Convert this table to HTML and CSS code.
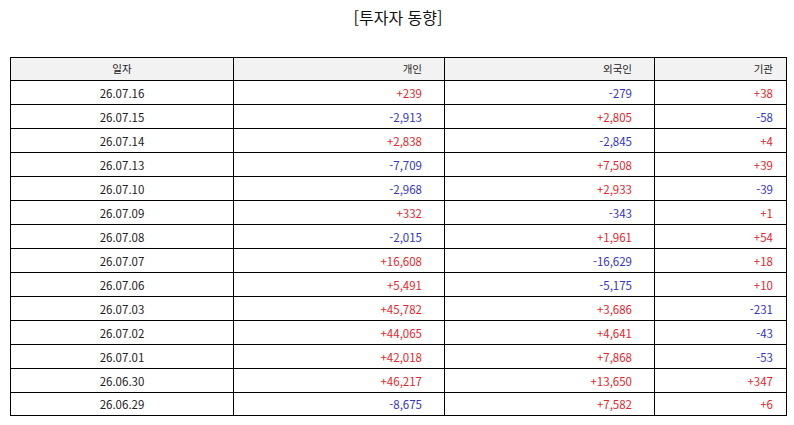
FILE: index.html
```html
<!DOCTYPE html>
<html lang="ko">
<head>
<meta charset="utf-8">
<link rel="stylesheet" href="styles.css">
</head>
<body>
<div class="page">
  <h1 class="title">[투자자 동향]</h1>
  <table class="grid">
    <colgroup>
      <col class="c-date"><col class="c-ind"><col class="c-for"><col class="c-inst">
    </colgroup>
    <thead>
      <tr><th class="date">일자</th><th class="num">개인</th><th class="num">외국인</th><th class="num last">기관</th></tr>
    </thead>
    <tbody>
      <tr><td class="date">26.07.16</td><td class="num up">+239</td><td class="num dn">-279</td><td class="num last up">+38</td></tr>
      <tr><td class="date">26.07.15</td><td class="num dn">-2,913</td><td class="num up">+2,805</td><td class="num last dn">-58</td></tr>
      <tr><td class="date">26.07.14</td><td class="num up">+2,838</td><td class="num dn">-2,845</td><td class="num last up">+4</td></tr>
      <tr><td class="date">26.07.13</td><td class="num dn">-7,709</td><td class="num up">+7,508</td><td class="num last up">+39</td></tr>
      <tr><td class="date">26.07.10</td><td class="num dn">-2,968</td><td class="num up">+2,933</td><td class="num last dn">-39</td></tr>
      <tr><td class="date">26.07.09</td><td class="num up">+332</td><td class="num dn">-343</td><td class="num last up">+1</td></tr>
      <tr><td class="date">26.07.08</td><td class="num dn">-2,015</td><td class="num up">+1,961</td><td class="num last up">+54</td></tr>
      <tr><td class="date">26.07.07</td><td class="num up">+16,608</td><td class="num dn">-16,629</td><td class="num last up">+18</td></tr>
      <tr><td class="date">26.07.06</td><td class="num up">+5,491</td><td class="num dn">-5,175</td><td class="num last up">+10</td></tr>
      <tr><td class="date">26.07.03</td><td class="num up">+45,782</td><td class="num up">+3,686</td><td class="num last dn">-231</td></tr>
      <tr><td class="date">26.07.02</td><td class="num up">+44,065</td><td class="num up">+4,641</td><td class="num last dn">-43</td></tr>
      <tr><td class="date">26.07.01</td><td class="num up">+42,018</td><td class="num up">+7,868</td><td class="num last dn">-53</td></tr>
      <tr><td class="date">26.06.30</td><td class="num up">+46,217</td><td class="num up">+13,650</td><td class="num last up">+347</td></tr>
      <tr><td class="date">26.06.29</td><td class="num dn">-8,675</td><td class="num up">+7,582</td><td class="num last up">+6</td></tr>
    </tbody>
  </table>
</div>
</body>
</html>
```
FILE: styles.css
```css
html, body {
  margin: 0;
  padding: 0;
  background: #ffffff;
}
body {
  font-family: "Noto Sans CJK KR", "Noto Sans", sans-serif;
  color: #222222;
}
.page {
  padding: 0 8px 0 10px;
}
.title {
  margin: 0;
  padding-top: 5px;
  height: 57px;
  box-sizing: border-box;
  text-align: center;
  font-size: 16px;
  font-weight: normal;
  line-height: 24px;
  color: #111111;
}
.grid {
  width: 776px;
  border-collapse: collapse;
  table-layout: fixed;
  font-size: 11.5px;
}
.c-date { width: 223px; }
.c-ind { width: 211px; }
.c-for { width: 210px; }
.c-inst { width: 132px; }
.grid th, .grid td {
  border: 1px solid #000000;
  height: 24px;
  padding: 0;
  line-height: 14px;
  font-weight: normal;
  box-sizing: border-box;
}
.grid th {
  height: 23px;
  background: #f2f2f2;
  color: #222222;
  font-size: 10.5px;
}
.grid tbody tr:last-child td {
  height: 23px;
}
.grid .date {
  text-align: center;
  color: #222222;
}
.grid .num {
  text-align: right;
  padding-right: 22px;
}
.grid .last {
  padding-right: 13px;
}
.up { color: #e5262c; }
.dn { color: #3434c8; }
```
